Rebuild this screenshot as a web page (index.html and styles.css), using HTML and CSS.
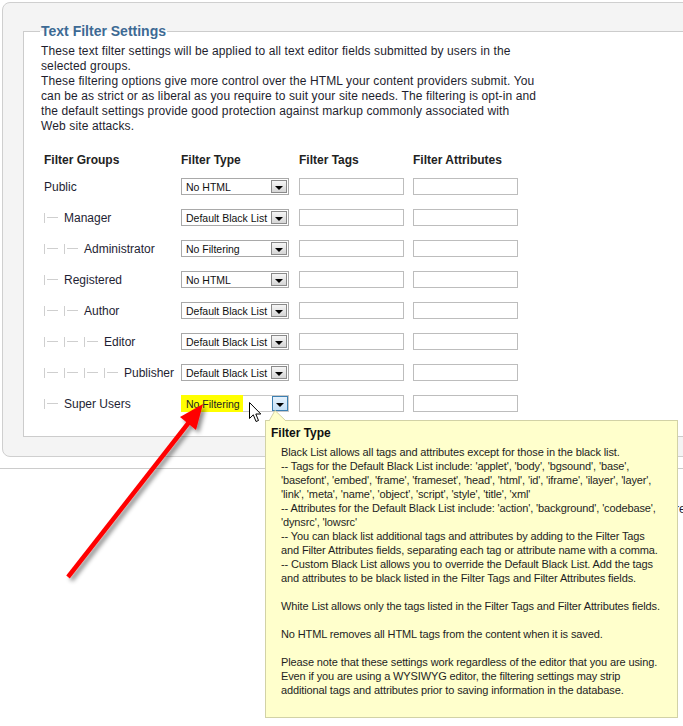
FILE: index.html
```
<!DOCTYPE html>
<html>
<head>
<meta charset="utf-8">
<link rel="stylesheet" href="styles.css">
</head>
<body>
<div class="page">
  <div class="panel">
    <fieldset class="fs">
      <legend class="legend">Text Filter Settings</legend>
      <p class="desc">These text filter settings will be applied to all text editor fields submitted by users in the<br>selected groups.<br>These filtering options give more control over the HTML your content providers submit. You<br>can be as strict or as liberal as you require to suit your site needs. The filtering is opt-in and<br>the default settings provide good protection against markup commonly associated with<br>Web site attacks.</p>
      <div class="grid">
        <div class="hd">Filter Groups</div><div class="hd">Filter Type</div><div class="hd">Filter Tags</div><div class="hd">Filter Attributes</div>

        <div class="grp">Public</div>
        <div class="cell"><div class="sel"><span class="val">No HTML</span><span class="btn"></span></div></div>
        <div class="cell"><div class="inp"></div></div><div class="cell"><div class="inp"></div></div>

        <div class="grp"><span class="tr"></span>Manager</div>
        <div class="cell"><div class="sel"><span class="val">Default Black List</span><span class="btn"></span></div></div>
        <div class="cell"><div class="inp"></div></div><div class="cell"><div class="inp"></div></div>

        <div class="grp"><span class="tr"></span><span class="tr"></span>Administrator</div>
        <div class="cell"><div class="sel"><span class="val">No Filtering</span><span class="btn"></span></div></div>
        <div class="cell"><div class="inp"></div></div><div class="cell"><div class="inp"></div></div>

        <div class="grp"><span class="tr"></span>Registered</div>
        <div class="cell"><div class="sel"><span class="val">No HTML</span><span class="btn"></span></div></div>
        <div class="cell"><div class="inp"></div></div><div class="cell"><div class="inp"></div></div>

        <div class="grp"><span class="tr"></span><span class="tr"></span>Author</div>
        <div class="cell"><div class="sel"><span class="val">Default Black List</span><span class="btn"></span></div></div>
        <div class="cell"><div class="inp"></div></div><div class="cell"><div class="inp"></div></div>

        <div class="grp"><span class="tr"></span><span class="tr"></span><span class="tr"></span>Editor</div>
        <div class="cell"><div class="sel"><span class="val">Default Black List</span><span class="btn"></span></div></div>
        <div class="cell"><div class="inp"></div></div><div class="cell"><div class="inp"></div></div>

        <div class="grp"><span class="tr"></span><span class="tr"></span><span class="tr"></span><span class="tr"></span>Publisher</div>
        <div class="cell"><div class="sel"><span class="val">Default Black List</span><span class="btn"></span></div></div>
        <div class="cell"><div class="inp"></div></div><div class="cell"><div class="inp"></div></div>

        <div class="grp"><span class="tr"></span>Super Users</div>
        <div class="cell"><div class="sel sel-active"><span class="val val-hl">No Filtering</span><span class="btn btn-hover"></span></div></div>
        <div class="cell"><div class="inp"></div></div><div class="cell"><div class="inp"></div></div>
      </div>
    </fieldset>
  </div>
  <div class="below">re</div>

  <svg class="arrow" width="683" height="726" viewBox="0 0 683 726">
    <defs>
      <filter id="sh" x="-20%" y="-20%" width="140%" height="140%">
        <feDropShadow dx="3" dy="3" stdDeviation="2" flood-color="#000" flood-opacity="0.45"/>
      </filter>
    </defs>
    <g filter="url(#sh)">
      <line x1="68" y1="577" x2="190" y2="421" stroke="#ff0000" stroke-width="4.5"/>
      <polygon points="203,404 180,417 196,430" fill="#ff0000"/>
    </g>
  </svg>

  <svg class="cursor" width="13" height="21" viewBox="0 0 13 21">
    <path d="M0.5,0.5 L0.5,16.5 L4.3,12.8 L7,19.5 L9.5,18.5 L6.8,12 L11.8,12 Z" fill="#fff" stroke="#000" stroke-width="1" stroke-linejoin="miter"/>
  </svg>

  <div class="tip">
    <svg class="tip-ptr" width="20" height="11" viewBox="0 0 20 11">
      <polygon points="8,0.5 2,11 19,11" fill="#ffffcc"/>
      <polyline points="2,11 8,0.5 19,11" fill="none" stroke="#d2d2a6" stroke-width="1"/>
    </svg>
    <div class="tip-title">Filter Type</div>
    <div class="tip-body">Black List allows all tags and attributes except for those in the black list.<br>-- Tags for the Default Black List include: 'applet', 'body', 'bgsound', 'base',<br>'basefont', 'embed', 'frame', 'frameset', 'head', 'html', 'id', 'iframe', 'ilayer', 'layer',<br>'link', 'meta', 'name', 'object', 'script', 'style', 'title', 'xml'<br>-- Attributes for the Default Black List include: 'action', 'background', 'codebase',<br>'dynsrc', 'lowsrc'<br>-- You can black list additional tags and attributes by adding to the Filter Tags<br>and Filter Attributes fields, separating each tag or attribute name with a comma.<br>-- Custom Black List allows you to override the Default Black List. Add the tags<br>and attributes to be black listed in the Filter Tags and Filter Attributes fields.<br><br>White List allows only the tags listed in the Filter Tags and Filter Attributes fields.<br><br>No HTML removes all HTML tags from the content when it is saved.<br><br>Please note that these settings work regardless of the editor that you are using.<br>Even if you are using a WYSIWYG editor, the filtering settings may strip<br>additional tags and attributes prior to saving information in the database.</div>
  </div>
</div>
</body>
</html>
```
FILE: styles.css
```
* { box-sizing: border-box; }
html, body { margin: 0; padding: 0; background: #fff; }
body { font-family: "Liberation Sans", Arial, sans-serif; color: #222; font-size: 12px; }
.page { position: relative; width: 683px; height: 726px; overflow: hidden; }

.panel {
  margin: 2px 0 0 2px;
  width: 780px;
  background: #f4f4f4;
  border: 1px solid #cfcfcf;
  border-radius: 8px;
  padding: 20px 0 19px 20px;
}
.fs {
  margin: 0;
  width: 740px;
  background: #fff;
  border: 1px solid #cccccc;
  padding: 0 0 17px 17px;
  min-width: 0;
}
.legend {
  padding: 0 1px;
  margin-left: -1px;
  font-size: 14px;
  line-height: 16px;
  font-weight: bold;
  color: #3d6a94;
}
.desc {
  margin: 5px 0 0 0;
  font-size: 12px;
  line-height: 15px;
  color: #1e1e2e;
  white-space: nowrap;
  letter-spacing: 0.12px;
}
.grid {
  display: grid;
  grid-template-columns: 137px 118px 114px 105px;
  grid-template-rows: 21px;
  grid-auto-rows: 31px;
  margin: 16px 0 0 3px;
}
.hd {
  font-weight: bold;
  font-size: 12px;
  height: 21px;
  line-height: 21px;
  color: #222;
  align-self: start;
}
.grp, .cell {
  display: flex;
  align-items: center;
  font-size: 12px;
  color: #1e1e33;
  white-space: nowrap;
}
.tr {
  display: inline-block;
  width: 14px;
  height: 10px;
  margin-right: 6px;
  border-left: 1px solid #cfcfcf;
  background: linear-gradient(#cfcfcf, #cfcfcf) no-repeat 2px 50% / 12px 1px;
}
.sel {
  width: 108px;
  height: 17px;
  border: 1px solid #a9a9a9;
  background: #fff;
  display: flex;
  align-items: center;
  justify-content: space-between;
  padding: 0 1px 0 0;
}
.val {
  font-family: "Liberation Sans", Arial, sans-serif;
  font-size: 10.5px;
  color: #111;
  padding-left: 4px;
  white-space: nowrap;
}
.btn {
  position: relative;
  width: 16px;
  height: 13px;
  border: 1px solid #8a8a8a;
  background: linear-gradient(#f6f6f6, #d6d6d6);
  flex: none;
}
.btn::after {
  content: "";
  position: absolute;
  left: 3px;
  top: 5px;
  border-left: 4px solid transparent;
  border-right: 4px solid transparent;
  border-top: 4px solid #000;
}
.sel-active { border-color: #c8c8c8; }
.val-hl {
  background: #ffff00;
  align-self: stretch;
  display: flex;
  align-items: center;
  width: 62px;
  margin: -1px 0 -1px -1px;
  padding-left: 5px;
  color: #222;
}
.btn-hover {
  border-color: #3c7fb1;
  background: linear-gradient(#e6f2fc, #c4dff6);
  height: 15px;
  margin-right: -1px;
}
.btn-hover::after { top: 6px; }
.inp {
  width: 105px;
  height: 17px;
  border: 1px solid #bdbdbd;
  background: #fff;
}

.below {
  margin-top: 11px;
  border-top: 1px solid #cccccc;
  padding: 33px 0 0 675px;
  white-space: nowrap;
  font-size: 12px;
  color: #1e1e33;
  line-height: 15px;
}

.arrow { position: absolute; left: 0; top: 0; pointer-events: none; }
.cursor { position: absolute; left: 249px; top: 402px; }

.tip {
  position: absolute;
  left: 265px;
  top: 420px;
  width: 413px;
  height: 298px;
  background: #ffffcc;
  border: 1px solid #d2d2a6;
  padding: 5px 0 0 5px;
}
.tip-ptr { position: absolute; left: 1px; top: -11px; }
.tip-title {
  font-weight: bold;
  font-size: 12px;
  line-height: 14px;
  color: #111;
}
.tip-body {
  margin: 5px 0 0 10px;
  font-size: 11px;
  line-height: 14px;
  color: #1e1e1e;
  white-space: nowrap;
  letter-spacing: -0.12px;
}
```
